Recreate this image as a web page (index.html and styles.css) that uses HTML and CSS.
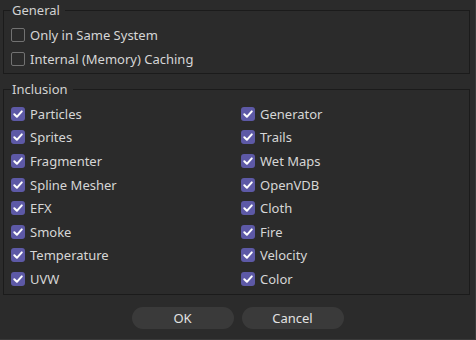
FILE: index.html
```html
<!DOCTYPE html>
<html>
<head>
<meta charset="utf-8">
<link rel="stylesheet" href="styles.css">
</head>
<body>
<div class="dialog">
  <fieldset class="group group-general">
    <legend class="group-title">General</legend>
    <div class="list">
      <label class="opt"><span class="box"></span><span class="txt">Only in Same System</span></label>
      <label class="opt"><span class="box"></span><span class="txt">Internal (Memory) Caching</span></label>
    </div>
  </fieldset>
  <fieldset class="group group-inclusion">
    <legend class="group-title">Inclusion</legend>
    <div class="grid">
      <label class="opt"><span class="box on"><svg viewBox="0 0 14 14"><path d="M3.3 7.2 L5.9 9.8 L10.8 4.4"/></svg></span><span class="txt">Particles</span></label>
      <label class="opt"><span class="box on"><svg viewBox="0 0 14 14"><path d="M3.3 7.2 L5.9 9.8 L10.8 4.4"/></svg></span><span class="txt">Generator</span></label>
      <label class="opt"><span class="box on"><svg viewBox="0 0 14 14"><path d="M3.3 7.2 L5.9 9.8 L10.8 4.4"/></svg></span><span class="txt">Sprites</span></label>
      <label class="opt"><span class="box on"><svg viewBox="0 0 14 14"><path d="M3.3 7.2 L5.9 9.8 L10.8 4.4"/></svg></span><span class="txt">Trails</span></label>
      <label class="opt"><span class="box on"><svg viewBox="0 0 14 14"><path d="M3.3 7.2 L5.9 9.8 L10.8 4.4"/></svg></span><span class="txt">Fragmenter</span></label>
      <label class="opt"><span class="box on"><svg viewBox="0 0 14 14"><path d="M3.3 7.2 L5.9 9.8 L10.8 4.4"/></svg></span><span class="txt">Wet Maps</span></label>
      <label class="opt"><span class="box on"><svg viewBox="0 0 14 14"><path d="M3.3 7.2 L5.9 9.8 L10.8 4.4"/></svg></span><span class="txt">Spline Mesher</span></label>
      <label class="opt"><span class="box on"><svg viewBox="0 0 14 14"><path d="M3.3 7.2 L5.9 9.8 L10.8 4.4"/></svg></span><span class="txt">OpenVDB</span></label>
      <label class="opt"><span class="box on"><svg viewBox="0 0 14 14"><path d="M3.3 7.2 L5.9 9.8 L10.8 4.4"/></svg></span><span class="txt">EFX</span></label>
      <label class="opt"><span class="box on"><svg viewBox="0 0 14 14"><path d="M3.3 7.2 L5.9 9.8 L10.8 4.4"/></svg></span><span class="txt">Cloth</span></label>
      <label class="opt"><span class="box on"><svg viewBox="0 0 14 14"><path d="M3.3 7.2 L5.9 9.8 L10.8 4.4"/></svg></span><span class="txt">Smoke</span></label>
      <label class="opt"><span class="box on"><svg viewBox="0 0 14 14"><path d="M3.3 7.2 L5.9 9.8 L10.8 4.4"/></svg></span><span class="txt">Fire</span></label>
      <label class="opt"><span class="box on"><svg viewBox="0 0 14 14"><path d="M3.3 7.2 L5.9 9.8 L10.8 4.4"/></svg></span><span class="txt">Temperature</span></label>
      <label class="opt"><span class="box on"><svg viewBox="0 0 14 14"><path d="M3.3 7.2 L5.9 9.8 L10.8 4.4"/></svg></span><span class="txt">Velocity</span></label>
      <label class="opt"><span class="box on"><svg viewBox="0 0 14 14"><path d="M3.3 7.2 L5.9 9.8 L10.8 4.4"/></svg></span><span class="txt">UVW</span></label>
      <label class="opt"><span class="box on"><svg viewBox="0 0 14 14"><path d="M3.3 7.2 L5.9 9.8 L10.8 4.4"/></svg></span><span class="txt">Color</span></label>
    </div>
  </fieldset>
  <div class="buttons">
    <button class="btn">OK</button>
    <button class="btn">Cancel</button>
  </div>
</div>
</body>
</html>
```

FILE: styles.css
```css
html, body {
  margin: 0;
  padding: 0;
  background: #2b2b2b;
}
body {
  width: 476px;
  height: 340px;
  overflow: hidden;
  font-family: "Noto Sans", "Open Sans", sans-serif;
  font-size: 13px;
  color: #d6d6d6;
}
.dialog {
  display: flex;
  flex-direction: column;
  height: 340px;
  box-sizing: border-box;
  border-right: 1px solid #3a3a3a;
  border-bottom: 1px solid #3a3a3a;
}
.group {
  margin: 2px 5px 0 3px;
  padding: 5px 7px 2px 7px;
  border: 1px solid #1b1b1b;
  min-width: 0;
}
.group-inclusion {
  margin-top: 7px;
  padding-bottom: 3px;
}
.group-title {
  padding: 0 5px 0 1px;
  line-height: 16px;
  height: 16px;
  color: #d2d2d2;
}
.list {
  display: flex;
  flex-direction: column;
}
.list .opt {
  height: 24px;
}
.grid {
  display: grid;
  grid-template-columns: 230px 1fr;
  grid-auto-rows: 23.6px;
}
.opt {
  display: flex;
  align-items: center;
  line-height: 16px;
}
.box {
  width: 14px;
  height: 14px;
  box-sizing: border-box;
  border: 1.5px solid #727272;
  border-radius: 2px;
  margin-right: 5px;
  flex: none;
  display: flex;
}
.box.on {
  border: none;
  background: #5d59a6;
  border-radius: 3px;
}
.box svg {
  width: 14px;
  height: 14px;
}
.box path {
  fill: none;
  stroke: #ffffff;
  stroke-width: 2;
  stroke-linecap: round;
  stroke-linejoin: round;
}
.txt {
  white-space: nowrap;
}
.buttons {
  display: flex;
  justify-content: center;
  gap: 8px;
  margin-top: 12px;
  padding-left: 0;
}
.btn {
  width: 102px;
  height: 22px;
  border: none;
  border-radius: 11px;
  background: #3a3a3a;
  color: #e2e2e2;
  font-family: "Noto Sans", "Open Sans", sans-serif;
  font-size: 13px;
  padding: 0;
  line-height: 22px;
}
```
